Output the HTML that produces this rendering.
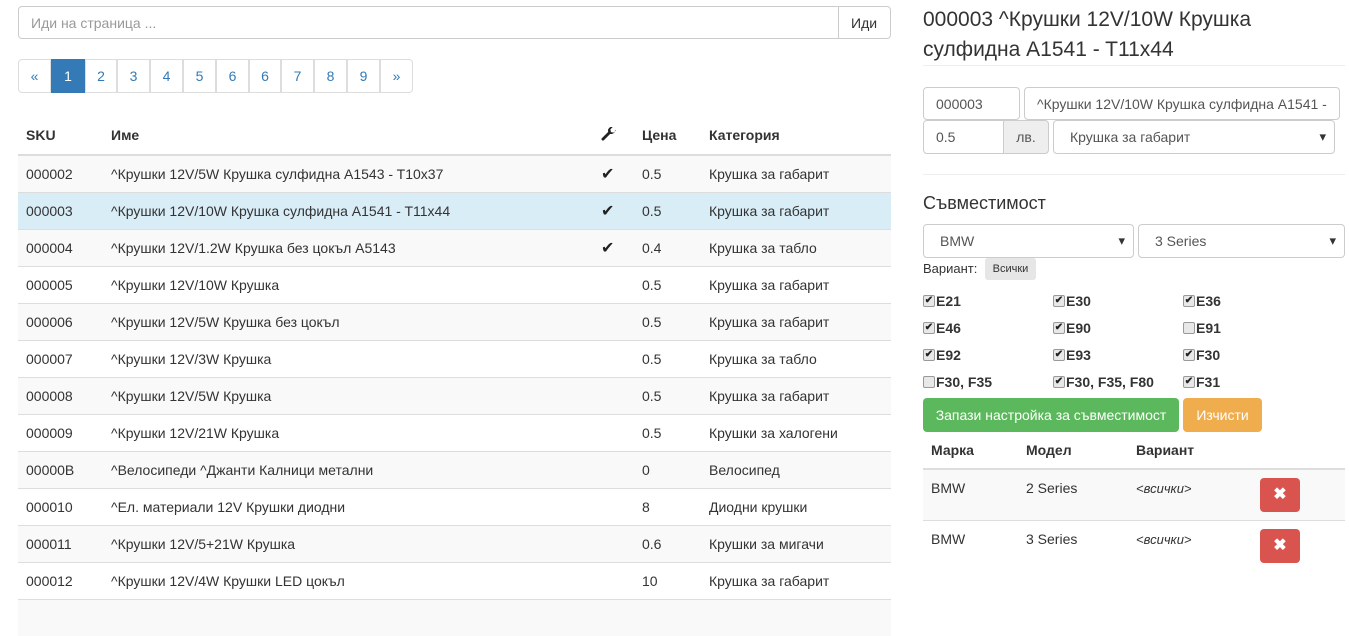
<!DOCTYPE html>
<html><head><meta charset="utf-8"><style>
*{box-sizing:border-box;margin:0;padding:0}
body{width:1349px;height:607px;overflow:hidden;background:#fff;font-family:"Liberation Sans",sans-serif;font-size:14px;color:#333;position:relative}
.a{position:absolute}
.inp{position:absolute;border:1px solid #ccc;border-radius:4px;background:#fff;padding:0 12px;display:flex;align-items:center;font-size:14px;color:#555;white-space:nowrap;overflow:hidden}
.pg{position:absolute;top:59px;height:34px;border:1px solid #ddd;margin-left:-1px;color:#337ab7;display:flex;align-items:center;justify-content:center}
.row{position:absolute;left:18px;width:873px;height:37px;border-top:1px solid #ddd}
.row span{position:absolute;top:10px}
.row span.ck{font-size:16px;top:8px;color:#222}
.cb{position:absolute;font-weight:bold;font-size:14px;display:flex;align-items:center}
.cb i{display:inline-block;width:12px;height:12px;border:1px solid #999;border-radius:2px;background:#e8e8e8;margin-right:1px;font-style:normal;font-size:10px;line-height:10px;text-align:center;color:#222}
.sel::after{content:"▾";position:absolute;right:8px;top:8px;font-size:13px;color:#333}
.xb{position:absolute;left:1260px;width:40px;height:34px;background:#d9534f;border-radius:4px;color:#fff;font-weight:bold;text-align:center;line-height:34px;font-size:16px}
</style></head><body>
<div class="inp" style="left:18px;top:6px;width:821px;height:33px;border-radius:4px 0 0 4px;color:#999">Иди на страница ...</div>
<div class="inp" style="left:838px;top:6px;width:53px;height:33px;border-radius:0 4px 4px 0;color:#333">Иди</div>
<div class="pg" style="left:19px;width:33px;border-radius:4px 0 0 4px">«</div>
<div class="pg" style="left:52px;width:34px;background:#337ab7;border-color:#337ab7;color:#fff">1</div>
<div class="pg" style="left:86px;width:32px">2</div>
<div class="pg" style="left:118px;width:33px">3</div>
<div class="pg" style="left:151px;width:33px">4</div>
<div class="pg" style="left:184px;width:33px">5</div>
<div class="pg" style="left:217px;width:33px">6</div>
<div class="pg" style="left:250px;width:32px">6</div>
<div class="pg" style="left:282px;width:33px">7</div>
<div class="pg" style="left:315px;width:33px">8</div>
<div class="pg" style="left:348px;width:33px">9</div>
<div class="pg" style="left:381px;width:33px;border-radius:0 4px 4px 0">»</div>
<div class="a" style="left:26px;top:127px;font-weight:bold">SKU</div>
<div class="a" style="left:111px;top:127px;font-weight:bold">Име</div>
<svg class="a" style="left:601px;top:127px" width="15" height="15" viewBox="0 0 16 16"><path d="M15 3.5a4 4 0 0 1-5.2 3.8L3.2 14a1.5 1.5 0 0 1-2.2-2.2l6.7-6.6A4 4 0 0 1 12.5 0L10 2.5l.6 2.9 2.9.6L16 3.5z" fill="#222"/></svg>
<div class="a" style="left:642px;top:127px;font-weight:bold">Цена</div>
<div class="a" style="left:709px;top:127px;font-weight:bold">Категория</div>
<div class="a" style="left:18px;top:154px;width:873px;height:2px;background:#ddd"></div>
<div class="row" style="top:156px;background:#f9f9f9;border-top:0"><span style="left:8px">000002</span><span style="left:93px">^Крушки 12V/5W Крушка сулфидна A1543 - T10x37</span><span class="ck" style="left:583px">✔</span><span style="left:624px">0.5</span><span style="left:691px">Крушка за габарит</span></div>
<div class="row" style="top:192px;background:#d9edf7"><span style="left:8px">000003</span><span style="left:93px">^Крушки 12V/10W Крушка сулфидна A1541 - T11x44</span><span class="ck" style="left:583px">✔</span><span style="left:624px">0.5</span><span style="left:691px">Крушка за габарит</span></div>
<div class="row" style="top:229px;background:#f9f9f9"><span style="left:8px">000004</span><span style="left:93px">^Крушки 12V/1.2W Крушка без цокъл A5143</span><span class="ck" style="left:583px">✔</span><span style="left:624px">0.4</span><span style="left:691px">Крушка за табло</span></div>
<div class="row" style="top:266px"><span style="left:8px">000005</span><span style="left:93px">^Крушки 12V/10W Крушка</span><span style="left:624px">0.5</span><span style="left:691px">Крушка за габарит</span></div>
<div class="row" style="top:303px;background:#f9f9f9"><span style="left:8px">000006</span><span style="left:93px">^Крушки 12V/5W Крушка без цокъл</span><span style="left:624px">0.5</span><span style="left:691px">Крушка за габарит</span></div>
<div class="row" style="top:340px"><span style="left:8px">000007</span><span style="left:93px">^Крушки 12V/3W Крушка</span><span style="left:624px">0.5</span><span style="left:691px">Крушка за табло</span></div>
<div class="row" style="top:377px;background:#f9f9f9"><span style="left:8px">000008</span><span style="left:93px">^Крушки 12V/5W Крушка</span><span style="left:624px">0.5</span><span style="left:691px">Крушка за габарит</span></div>
<div class="row" style="top:414px"><span style="left:8px">000009</span><span style="left:93px">^Крушки 12V/21W Крушка</span><span style="left:624px">0.5</span><span style="left:691px">Крушки за халогени</span></div>
<div class="row" style="top:451px;background:#f9f9f9"><span style="left:8px">00000B</span><span style="left:93px">^Велосипеди ^Джанти Калници метални</span><span style="left:624px">0</span><span style="left:691px">Велосипед</span></div>
<div class="row" style="top:488px"><span style="left:8px">000010</span><span style="left:93px">^Ел. материали 12V Крушки диодни</span><span style="left:624px">8</span><span style="left:691px">Диодни крушки</span></div>
<div class="row" style="top:525px;background:#f9f9f9"><span style="left:8px">000011</span><span style="left:93px">^Крушки 12V/5+21W Крушка</span><span style="left:624px">0.6</span><span style="left:691px">Крушки за мигачи</span></div>
<div class="row" style="top:562px"><span style="left:8px">000012</span><span style="left:93px">^Крушки 12V/4W Крушки LED цокъл</span><span style="left:624px">10</span><span style="left:691px">Крушка за габарит</span></div>
<div class="row" style="top:599px;background:#f9f9f9"></div>

<div class="a" style="left:923px;top:5px;font-size:21px;line-height:30px;width:400px;color:#333">000003 ^Крушки 12V/10W Крушка сулфидна A1541 - T11x44</div>
<div class="a" style="left:923px;top:65px;width:422px;height:1px;background:#eee"></div>
<div class="inp" style="left:923px;top:87px;width:97px;height:33px">000003</div>
<div class="inp" style="left:1024px;top:87px;width:316px;height:33px">^Крушки 12V/10W Крушка сулфидна A1541 -</div>
<div class="inp" style="left:923px;top:120px;width:81px;height:34px;border-radius:4px 0 0 4px">0.5</div>
<div class="inp" style="left:1003px;top:120px;width:46px;height:34px;border-radius:0 4px 4px 0;background:#eee;justify-content:center">лв.</div>
<div class="inp sel" style="left:1053px;top:120px;width:282px;height:34px;padding-left:16px">Крушка за габарит</div>
<div class="a" style="left:923px;top:174px;width:422px;height:1px;background:#eee"></div>
<div class="a" style="left:923px;top:193px;font-size:18px">Съвместимост</div>
<div class="inp sel" style="left:923px;top:224px;width:211px;height:34px;padding-left:16px">BMW</div>
<div class="inp sel" style="left:1138px;top:224px;width:207px;height:34px;padding-left:16px">3 Series</div>
<div class="a" style="left:923px;top:261px;font-size:13px">Вариант:</div>
<div class="a" style="left:985px;top:258px;width:51px;height:22px;background:#e6e6e6;border-radius:3px;font-size:11px;line-height:22px;text-align:center">Всички</div>
<div class="cb" style="left:923px;top:293px"><i>✔</i>E21</div>
<div class="cb" style="left:1053px;top:293px"><i>✔</i>E30</div>
<div class="cb" style="left:1183px;top:293px"><i>✔</i>E36</div>
<div class="cb" style="left:923px;top:320px"><i>✔</i>E46</div>
<div class="cb" style="left:1053px;top:320px"><i>✔</i>E90</div>
<div class="cb" style="left:1183px;top:320px"><i></i>E91</div>
<div class="cb" style="left:923px;top:347px"><i>✔</i>E92</div>
<div class="cb" style="left:1053px;top:347px"><i>✔</i>E93</div>
<div class="cb" style="left:1183px;top:347px"><i>✔</i>F30</div>
<div class="cb" style="left:923px;top:374px"><i></i>F30, F35</div>
<div class="cb" style="left:1053px;top:374px"><i>✔</i>F30, F35, F80</div>
<div class="cb" style="left:1183px;top:374px"><i>✔</i>F31</div>
<div class="a" style="left:923px;top:398px;width:256px;height:34px;background:#5cb85c;border-radius:4px;color:#fff;line-height:34px;text-align:center">Запази настройка за съвместимост</div>
<div class="a" style="left:1183px;top:398px;width:79px;height:34px;background:#f0ad4e;border-radius:4px;color:#fff;line-height:34px;text-align:center">Изчисти</div>
<div class="a" style="left:931px;top:442px;font-weight:bold">Марка</div>
<div class="a" style="left:1026px;top:442px;font-weight:bold">Модел</div>
<div class="a" style="left:1136px;top:442px;font-weight:bold">Вариант</div>
<div class="a" style="left:923px;top:468px;width:422px;height:2px;background:#ddd"></div>
<div class="a" style="left:923px;top:470px;width:422px;height:50px;background:#f9f9f9"></div>
<div class="a" style="left:923px;top:520px;width:422px;height:1px;background:#ddd"></div>
<div class="a" style="left:931px;top:480px">BMW</div><div class="a" style="left:1026px;top:480px">2 Series</div><div class="a" style="left:1136px;top:481px;font-style:italic;font-size:13px">&lt;всички&gt;</div>
<div class="xb" style="top:478px">✖</div>
<div class="a" style="left:931px;top:531px">BMW</div><div class="a" style="left:1026px;top:531px">3 Series</div><div class="a" style="left:1136px;top:532px;font-style:italic;font-size:13px">&lt;всички&gt;</div>
<div class="xb" style="top:529px">✖</div>
</body></html>
